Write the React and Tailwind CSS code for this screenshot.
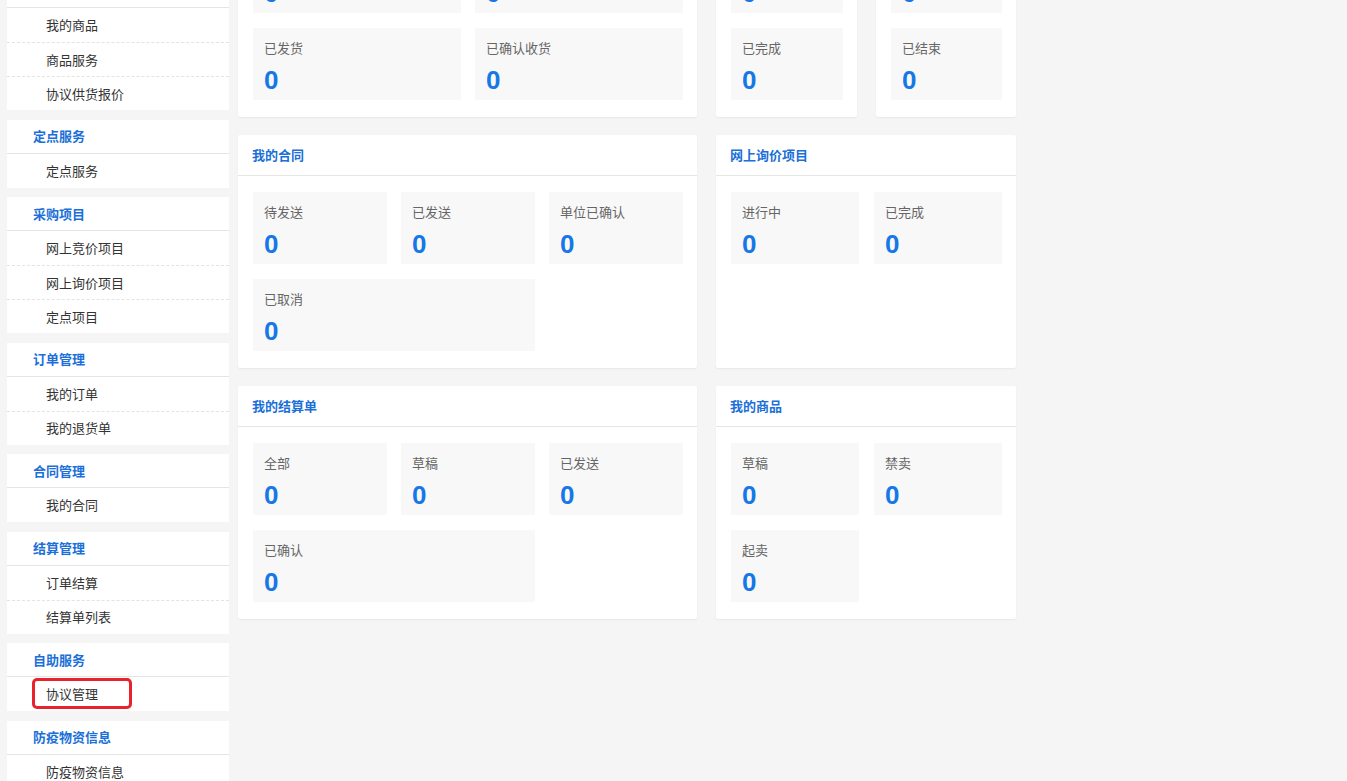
import React from "react";

const font = { fontFamily: '"Noto Sans CJK SC", "Noto Sans", sans-serif' };

const sidebar = [
  { title: "商品管理", items: ["我的商品", "商品服务", "协议供货报价"] },
  { title: "定点服务", items: ["定点服务"] },
  { title: "采购项目", items: ["网上竞价项目", "网上询价项目", "定点项目"] },
  { title: "订单管理", items: ["我的订单", "我的退货单"] },
  { title: "合同管理", items: ["我的合同"] },
  { title: "结算管理", items: ["订单结算", "结算单列表"] },
  { title: "自助服务", items: ["协议管理"], marked: true },
  { title: "防疫物资信息", items: ["防疫物资信息"] },
];

function Tile({ label, value = 0, className = "" }) {
  return (
    <div className={"h-[72px] bg-[#f8f8f8] pl-[11px] pt-[11px] flex flex-col " + className}>
      <div className="h-[18px] leading-[18px] text-[13px] text-[#666]">{label}</div>
      <div
        className="mt-[8px] leading-[30px] text-[26px] font-bold text-[#1677e6]"
        style={{ fontFamily: '"Liberation Sans", Arial, sans-serif' }}
      >
        {value}
      </div>
    </div>
  );
}

function Card({ title, cols, children }) {
  return (
    <div className="bg-white rounded-[2px] shadow-[0_1px_2px_rgba(0,0,0,0.06)]">
      <div className="h-[41px] border-b border-[#e6e6e6] flex items-center pl-[14px] text-[13px] font-bold text-[#1a6fd8]">
        {title}
      </div>
      <div className={"grid gap-y-[15px] pl-[15px] pr-[14px] pt-[16px] pb-[17px] " + cols}>{children}</div>
    </div>
  );
}

export default function App() {
  return (
    <div className="w-[1347px] h-[781px] overflow-hidden bg-[#f5f5f5]" style={font}>
      <div className="flex items-start">
        {/* Sidebar */}
        <div className="ml-[7px] w-[222px] mt-[-26px] flex flex-col gap-[9.5px]">
          {sidebar.map((sec) => (
            <div key={sec.title} className="bg-white">
              <div className="h-[34px] border-b border-[#e5e5e5] flex items-center pl-[26px] text-[13px] font-bold text-[#1a6fd8]">
                {sec.title}
              </div>
              {sec.items.map((it, i) => (
                <div
                  key={it}
                  className={
                    "relative h-[34px] flex items-center pl-[39px] text-[13px] text-[#333] " +
                    (i > 0 ? "border-t border-dashed border-[#e3e3e3]" : "")
                  }
                >
                  {it}
                  {sec.marked && (
                    <div className="absolute left-[25px] top-[1px] w-[100px] h-[31px] border-[3px] border-[#e8232b] rounded-[5px]" />
                  )}
                </div>
              ))}
            </div>
          ))}
        </div>

        {/* Main */}
        <div className="ml-[9px] mt-[-116px] grid grid-cols-[459px_300px] gap-x-[19px] gap-y-[18px] items-stretch">
          <Card title="我的订单" cols="grid-cols-2 gap-x-[14px]">
            <Tile label="待确认" />
            <Tile label="待发货" />
            <Tile label="已发货" />
            <Tile label="已确认收货" />
          </Card>
          <div className="flex gap-[19px]">
            <div className="w-[141px]">
              <Card title="竞价项目" cols="grid-cols-1">
                <Tile label="进行中" />
                <Tile label="已完成" />
              </Card>
            </div>
            <div className="w-[140px]">
              <Card title="定点项目" cols="grid-cols-1">
                <Tile label="进行中" />
                <Tile label="已结束" />
              </Card>
            </div>
          </div>

          <Card title="我的合同" cols="grid-cols-3 gap-x-[14px]">
            <Tile label="待发送" />
            <Tile label="已发送" />
            <Tile label="单位已确认" />
            <Tile label="已取消" className="col-span-2" />
          </Card>
          <Card title="网上询价项目" cols="grid-cols-2 gap-x-[15px] content-start">
            <Tile label="进行中" />
            <Tile label="已完成" />
          </Card>

          <Card title="我的结算单" cols="grid-cols-3 gap-x-[14px]">
            <Tile label="全部" />
            <Tile label="草稿" />
            <Tile label="已发送" />
            <Tile label="已确认" className="col-span-2" />
          </Card>
          <Card title="我的商品" cols="grid-cols-2 gap-x-[15px] content-start">
            <Tile label="草稿" />
            <Tile label="禁卖" />
            <Tile label="起卖" />
          </Card>
        </div>
      </div>
    </div>
  );
}
